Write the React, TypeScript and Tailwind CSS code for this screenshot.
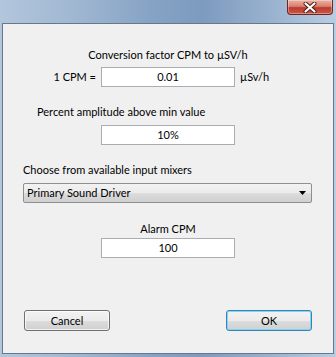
export default function App() {
  const inputCls =
    "w-[134px] h-[20px] border border-[#abadb3] bg-white flex items-center justify-center text-[11px] leading-[14px] text-black";
  const btnCls =
    "w-[86px] h-[21px] rounded-[3px] flex items-center justify-center text-[11px] leading-[14px] text-black bg-[linear-gradient(180deg,#f2f2f2_0%,#ebebeb_50%,#dddddd_51%,#cfcfcf_100%)]";
  return (
    <div className="w-[336px] h-[357px] flex flex-col px-[2px] pb-[3px] font-['Lato',sans-serif] bg-[linear-gradient(90deg,#b2c6dc_0%,#a2b9d3_20%,#86a3c5_45%,#7d9bbf_60%,#98b1ce_80%,#b9cde2_100%)]">
      <div className="h-[23px] flex justify-end items-start pr-[1px]">
        <div className="w-[46px] h-[15px] rounded-b-[4px] border border-t-0 border-[#6e2620] bg-[linear-gradient(180deg,#eab2a2_0%,#d9806f_45%,#c0392e_55%,#c75a45_100%)] flex items-center justify-center shadow-[inset_0_0_0_1px_rgba(255,255,255,0.35)]">
          <svg width="14" height="11" viewBox="0 0 14 11">
            <path
              d="M2.5 1.5 L11.5 9.5 M11.5 1.5 L2.5 9.5"
              stroke="#4a1a14"
              strokeWidth="4"
              strokeLinecap="round"
            />
            <path
              d="M2.5 1.5 L11.5 9.5 M11.5 1.5 L2.5 9.5"
              stroke="#ffffff"
              strokeWidth="2.2"
              strokeLinecap="round"
            />
          </svg>
        </div>
      </div>
      <div className="flex-1 border border-[#68778a] bg-[#f0f0f0] flex flex-col text-[11px] leading-[14px] text-black">
        <div className="mt-[24px] text-center">Conversion factor CPM to µSV/h</div>
        <div className="mt-[5px] grid grid-cols-[1fr_134px_1fr] gap-x-[5px] items-center">
          <div className="text-right">1 CPM =</div>
          <div className={inputCls}>0.01</div>
          <div>µSv/h</div>
        </div>
        <div className="mt-[18px] pl-[34px]">Percent amplitude above min value</div>
        <div className="mt-[6px] flex justify-center">
          <div className={inputCls}>10%</div>
        </div>
        <div className="mt-[18px] pl-[20px]">Choose from available input mixers</div>
        <div className="mt-[6px] ml-[20px] w-[289px] h-[20px] rounded-[2px] border border-[#8e8f8f] bg-[linear-gradient(180deg,#f2f2f2_0%,#ebebeb_50%,#dddddd_51%,#cfcfcf_100%)] flex items-center justify-between pl-[3px] pr-[5px]">
          <span>Primary Sound Driver</span>
          <svg width="7" height="4" viewBox="0 0 7 4">
            <path d="M0 0 H7 L3.5 4 Z" fill="#000" />
          </svg>
        </div>
        <div className="mt-[19px] text-center">Alarm CPM</div>
        <div className="mt-[2px] flex justify-center">
          <div className={inputCls}>100</div>
        </div>
        <div className="mt-[52px] flex justify-between px-[21px]">
          <div className={`${btnCls} border border-[#707070] shadow-[inset_0_0_0_1px_rgba(255,255,255,0.7)]`}>Cancel</div>
          <div className={`${btnCls} border border-[#3c7fb1] shadow-[inset_0_0_0_1px_#7fd8f8]`}>OK</div>
        </div>
      </div>
    </div>
  );
}
